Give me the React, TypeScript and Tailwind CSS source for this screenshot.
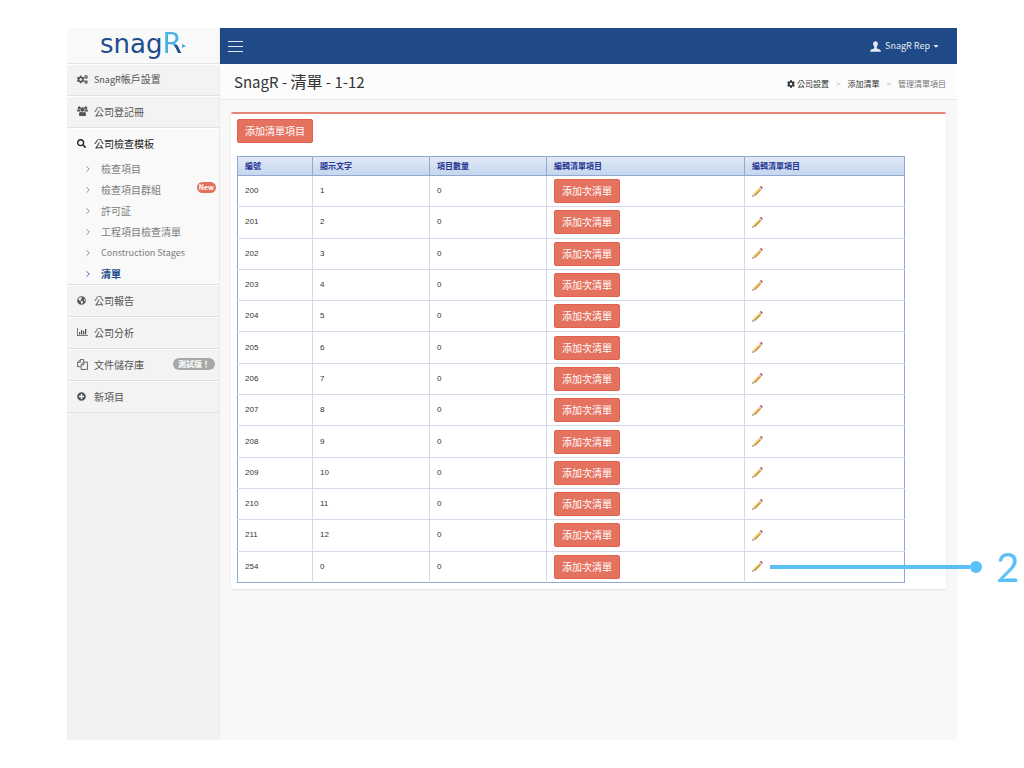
import type { ReactNode } from 'react'
import { ChevronRight } from 'lucide-react'
import { FaCog, FaCogs, FaGlobeAmericas, FaPlusCircle, FaSearch, FaCaretDown } from 'react-icons/fa'

const rows = [
  { id: 200, text: '1', count: 0 },
  { id: 201, text: '2', count: 0 },
  { id: 202, text: '3', count: 0 },
  { id: 203, text: '4', count: 0 },
  { id: 204, text: '5', count: 0 },
  { id: 205, text: '6', count: 0 },
  { id: 206, text: '7', count: 0 },
  { id: 207, text: '8', count: 0 },
  { id: 208, text: '9', count: 0 },
  { id: 209, text: '10', count: 0 },
  { id: 210, text: '11', count: 0 },
  { id: 211, text: '12', count: 0 },
  { id: 254, text: '0', count: 0 },
]

const subItems = [
  { label: '檢查項目' },
  { label: '檢查項目群組', isNew: true },
  { label: '許可証' },
  { label: '工程項目檢查清單' },
  { label: <span className="text-[9px]">Construction Stages</span> },
  { label: '清單', active: true },
]

const columns = ['編號', '顯示文字', '項目數量', '編輯清單項目', '編輯清單項目']

function GroupIcon() {
  return (
    <svg viewBox="0 0 22 20" className="h-[10px] w-[11px]" fill="currentColor" aria-hidden="true">
      <circle cx="4.500" cy="3.500" r="3" />
      <circle cx="17.500" cy="3.500" r="3" />
      <circle cx="11" cy="7" r="4.300" />
      <path d="M0 10.500C0 8 .8 6.500 2 6.500c1 .8 3 1 4 .5 0 1.800.4 3 1.200 4H2c-1.200 0-2 0-2-.5zM22 10.500c0-2.500-.8-4-2-4-1 .8-3 1-4 .5 0 1.800-.4 3-1.200 4H20c1.200 0 2 0 2-.5z" />
      <path d="M4 17.500c0-3.500 1-6 3.500-6 2 1.500 5 1.500 7 0 2.500 0 3.500 2.500 3.500 6 0 1.500-1 2.500-2.500 2.500h-9C5 20 4 19 4 17.500z" />
    </svg>
  )
}

function ChartIcon() {
  return (
    <svg viewBox="0 0 22 16" className="h-2 w-[11px]" fill="currentColor" aria-hidden="true">
      <path d="M0 0h1.500v14.500H22V16H0z" />
      <path d="M4 8h2.500v5H4zM8 4h2.500v9H8zM12 6h2.500v7H12zM16 2h2.500v11H16z" />
    </svg>
  )
}

function FilesIcon() {
  return (
    <svg viewBox="0 0 20 20" className="size-[11px]" fill="none" stroke="currentColor" strokeWidth="1.6" strokeLinejoin="round" aria-hidden="true">
      <path d="M7 14H1V6l5-5h6v4M6 1v5H1" />
      <path d="M12 5.500h7V19H7.500V10.500zM12.500 5.500v5h-5" />
    </svg>
  )
}

function UserIcon() {
  return (
    <svg viewBox="0 0 20 20" className="size-[11px]" fill="currentColor" aria-hidden="true">
      <path d="M10 .5c2.800 0 4.300 2 4.300 4.700 0 2.300-.9 4-2 5.200v1.800c0 .9.500 1.300 1.500 1.700l4 1.700c1.200.5 1.700 1.200 1.700 2.400v1.500H.5V18c0-1.200.5-1.900 1.700-2.400l4-1.700c1-.4 1.500-.8 1.500-1.700v-1.800c-1.100-1.200-2-2.900-2-5.200C5.700 2.500 7.200.5 10 .5z" />
    </svg>
  )
}

function PencilIcon() {
  return (
    <svg viewBox="0 0 22 22" className="size-[11px]" aria-hidden="true">
      <path d="M1 21l1.200-5.500 4.300 4.300z" fill="#cfb9a0" />
      <path d="M2.200 15.500L14 3.700l2.200 2.200L4.400 17.700z" fill="#f3dc85" />
      <path d="M4.400 17.700L16.200 5.900 18.300 8 6.500 19.800z" fill="#c98d2b" />
      <path d="M14 3.700L16 1.700 20.300 6 18.300 8z" fill="#c9c9d2" />
      <path d="M16 1.700c1.400-1.300 2.900-1.300 4-.2s1.500 2.900.3 4.500z" fill="#b83f45" />
      <path d="M.5 21.500l.8-3 2.200 2.200z" fill="#555" />
    </svg>
  )
}

function Logo() {
  return (
    <div className="flex h-9 items-baseline justify-center border-b border-[#e4e4e4] bg-[#f9f9f9] font-['DejaVu_Sans'] text-[26px] leading-8 text-[#204d8c]">
      <span>snag</span>
      <span className="bg-[linear-gradient(#204d8c,#204d8c),linear-gradient(#45b1e3,#45b1e3)] bg-[size:65%_48%,100%_100%] bg-[position:right_bottom,left_top] bg-no-repeat bg-clip-text text-[28px] text-transparent">
        R
      </span>
      <svg viewBox="0 0 4 4" className="size-1 self-center" fill="#45b1e3" aria-hidden="true">
        <path d="M0 0l4 2-4 2z" />
      </svg>
    </div>
  )
}

function MenuItem({ icon, label, badge, open }: { icon: ReactNode; label: ReactNode; badge?: string; open?: boolean }) {
  return (
    <a
      href="#"
      className={`flex items-center border-t border-t-white pr-1 pl-[10px] text-[10px] ${
        open ? 'h-[30px] text-[#222]' : 'h-8 border-b border-b-[#e2e2e2] bg-[#f3f3f3] pb-[2px] text-[#555]'
      }`}
    >
      <span className="flex w-[17px] items-center">{icon}</span>
      <span>{label}</span>
      {badge && (
        <span className="ml-auto h-3 rounded-full bg-[#a7a7a7] px-[5px] text-[8px] leading-3 font-bold text-white">{badge}</span>
      )}
    </a>
  )
}

function Sidebar() {
  return (
    <aside className="w-[153px] shrink-0 border-r border-[#ebebeb] bg-[#f2f2f2]">
      <Logo />
      <nav>
        <MenuItem icon={<FaCogs className="size-[11px]" />} label={<><span className="text-[9px]">SnagR</span>帳戶設置</>} />
        <MenuItem icon={<GroupIcon />} label="公司登記冊" />
        <div className="border-b border-[#e2e2e2] bg-[#f9f9f9]">
          <MenuItem icon={<FaSearch className="size-[9px]" />} label="公司檢查模板" open />
          <ul>
            {subItems.map((item, i) => (
              <li key={i}>
                <a
                  href="#"
                  className={`flex h-[21px] items-center pr-[3px] pl-4 text-[10px] ${
                    item.active ? 'font-bold text-[#204d8c]' : 'text-[#7d7d7d]'
                  }`}
                >
                  <ChevronRight className="mr-2 size-[10px]" />
                  {item.label}
                  {item.isNew && (
                    <span className="mb-1 ml-auto h-[11px] rounded-full bg-[#e36f5d] px-[2px] text-[7px] leading-[11px] font-bold text-white">New</span>
                  )}
                </a>
              </li>
            ))}
          </ul>
        </div>
        <MenuItem icon={<FaGlobeAmericas className="size-[9px]" />} label="公司報告" />
        <MenuItem icon={<ChartIcon />} label="公司分析" />
        <MenuItem icon={<FilesIcon />} label="文件儲存庫" badge="測試版！" />
        <MenuItem icon={<FaPlusCircle className="size-[9px]" />} label="新項目" />
      </nav>
    </aside>
  )
}

function ActionButton({ children }: { children: ReactNode }) {
  return (
    <button
      type="button"
      className="block h-6 rounded-[2px] border border-[#e0614e] bg-[#e5725f] px-[7px] text-[10px] leading-5 whitespace-nowrap text-white"
    >
      {children}
    </button>
  )
}

// Marker that points at the edit icon of the last row
function Callout() {
  return (
    <div className="absolute top-1/2 left-[18px] flex -translate-y-1/2 items-center text-[#5bc0f8]">
      <span className="h-1 w-[200px] bg-current" />
      <span className="size-3 rounded-full bg-current" />
      <span className="ml-[14px] font-['Lato'] text-[40px] leading-10">2</span>
    </div>
  )
}

function ListTable() {
  return (
    <table className="mt-[13px] h-[427px] w-[95%] table-fixed border-collapse border border-[#8fa9cf] text-left text-[8px]">
      <colgroup>
        <col className="w-[75px]" />
        <col className="w-[117px]" />
        <col className="w-[117px]" />
        <col className="w-[198px]" />
        <col />
      </colgroup>
      <thead>
        <tr className="h-[19px] bg-linear-to-b from-[#e1eaf6] to-[#c3d5ee]">
          {columns.map((name, i) => (
            <th key={i} className="border border-[#8fa9cf] px-[7px] font-bold text-[#283593]">
              {name}
            </th>
          ))}
        </tr>
      </thead>
      <tbody className="font-['Liberation_Sans'] text-[#333] [&_td]:border-[#d5daea] [&_td]:px-[7px] [&_td+td]:border-l [&_tr+tr_td]:border-t">
        {rows.map((row, i) => (
          <tr key={row.id} className="h-[31px]">
            <td>{row.id}</td>
            <td>{row.text}</td>
            <td>{row.count}</td>
            <td className="font-['Noto_Sans_CJK_TC',sans-serif]">
              <ActionButton>添加次清單</ActionButton>
            </td>
            <td>
              <div className="relative flex items-center">
                <button type="button" aria-label="編輯">
                  <PencilIcon />
                </button>
                {i === rows.length - 1 && <Callout />}
              </div>
            </td>
          </tr>
        ))}
      </tbody>
    </table>
  )
}

export default function App() {
  return (
    <div className="min-h-screen overflow-x-hidden bg-white px-[67px] py-7 font-['Noto_Sans_CJK_TC',sans-serif]">
      <div className="flex min-h-[calc(100vh-56px)] bg-[#f8f8f8]">
        <Sidebar />
        <main className="min-w-0 flex-1">
          {/* Top bar */}
          <header className="flex h-9 items-center justify-between bg-[#204a87] pr-[17px] pl-2 text-[#e3e9f2]">
            <button type="button" aria-label="Menu" className="flex w-[15px] flex-col gap-1">
              <span className="h-px bg-current" />
              <span className="h-px bg-current" />
              <span className="h-px bg-current" />
            </button>
            <button type="button" className="flex items-center text-[9px]">
              <UserIcon />
              <span className="mr-[2px] ml-1">SnagR Rep</span>
              <FaCaretDown className="size-2" />
            </button>
          </header>

          {/* Title and breadcrumb */}
          <div className="flex h-9 items-center justify-between border-b border-[#e8e8e8] bg-[#fcfcfc] pr-[11px] pl-[14px]">
            <h1 className="text-[15px] text-[#333]">
              SnagR - <span className="text-base">清單</span> - 1-12
            </h1>
            <nav className="flex items-center pt-1 text-[8px] text-[#333]">
              <FaCog className="mr-[2px] size-2" />
              <a href="#">公司設置</a>
              <span className="mx-[7px] text-[#bbb]">&gt;</span>
              <a href="#">添加清單</a>
              <span className="mx-[7px] text-[#bbb]">&gt;</span>
              <span className="text-[#777]">管理清單項目</span>
            </nav>
          </div>

          <section className="mx-[11px] mt-3 rounded-xs border-t-2 border-[#e58577] bg-white px-[6px] pt-[5px] pb-[6px] shadow-[0_1px_2px_rgba(0,0,0,0.1)]">
            <ActionButton>添加清單項目</ActionButton>
            <ListTable />
          </section>
        </main>
      </div>
    </div>
  )
}
